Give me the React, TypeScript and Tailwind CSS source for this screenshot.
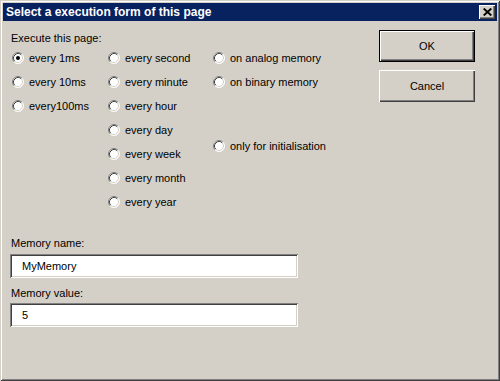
import React from "react";

const sunken =
  "shadow-[inset_1px_1px_#808080,inset_-1px_-1px_#ffffff,inset_2px_2px_#404040,inset_-2px_-2px_#d4d0c8]";
const raised =
  "shadow-[inset_1px_1px_#ffffff,inset_-1px_-1px_#404040,inset_-2px_-2px_#808080]";

function Radio({ label, checked = false, className = "" }: { label: string; checked?: boolean; className?: string }) {
  return (
    <label className={`flex h-[24px] items-center gap-[5px] ${className}`}>
      <svg width="12" height="12" viewBox="0 0 12 12" className="shrink-0">
        <circle cx="6" cy="6" r="5.5" fill="#ffffff" />
        <path d="M2.11 9.89 A5.5 5.5 0 0 1 9.89 2.11" fill="none" stroke="#808080" strokeWidth="1" />
        <path d="M9.89 2.11 A5.5 5.5 0 0 1 2.11 9.89" fill="none" stroke="#ffffff" strokeWidth="1" />
        <path d="M2.82 9.18 A4.5 4.5 0 0 1 9.18 2.82" fill="none" stroke="#404040" strokeWidth="1" />
        <path d="M9.18 2.82 A4.5 4.5 0 0 1 2.82 9.18" fill="none" stroke="#d4d0c8" strokeWidth="1" />
        {checked && <circle cx="6" cy="6" r="2" fill="#000000" />}
      </svg>
      <span className="whitespace-nowrap">{label}</span>
    </label>
  );
}

function Field({ value }: { value: string }) {
  return (
    <div className={`-ml-[1px] flex h-[24px] w-[288px] items-center bg-white pl-[12px] ${sunken}`}>{value}</div>
  );
}

export default function App() {
  return (
    <div
      className="flex h-[381px] w-[500px] flex-col bg-[#d4d0c8] p-[3px] text-[11px] leading-[13px] text-black shadow-[inset_1px_1px_#d4d0c8,inset_-1px_-1px_#404040,inset_2px_2px_#ffffff,inset_-2px_-2px_#808080]"
      style={{ fontFamily: "'Liberation Sans', Arial, sans-serif" }}
    >
      <div className="flex h-[18px] shrink-0 items-center bg-[#08215f] pl-[3px] pr-[2px]">
        <span className="flex-1 text-[12px] font-bold text-white">Select a execution form of this page</span>
        <button type="button" className={`flex h-[14px] w-[16px] items-center justify-center bg-[#d4d0c8] ${raised}`}>
          <svg width="9" height="8" viewBox="0 0 9 8">
            <path d="M0.7 0.6 L8.3 7.4 M8.3 0.6 L0.7 7.4" stroke="#000" strokeWidth="2" />
          </svg>
        </button>
      </div>

      <div className="flex flex-1 pl-[8px] pr-[22px]">
        <div className="flex flex-1 flex-col">
          <div className="mt-[11px] h-[13px]">Execute this page:</div>
          <div className="mt-[1px] grid grid-cols-[96px_105px_auto] pl-[1px]">
            <div className="flex flex-col">
              <Radio label="every 1ms" checked />
              <Radio label="every 10ms" />
              <Radio label="every100ms" />
            </div>
            <div className="flex flex-col">
              <Radio label="every second" />
              <Radio label="every minute" />
              <Radio label="every hour" />
              <Radio label="every day" />
              <Radio label="every week" />
              <Radio label="every month" />
              <Radio label="every year" />
            </div>
            <div className="flex flex-col">
              <Radio label="on analog memory" />
              <Radio label="on binary memory" />
              <Radio label="only for initialisation" className="mt-[40px]" />
            </div>
          </div>

          <div className="mt-[23px] h-[13px]">Memory name:</div>
          <div className="mt-[4px]">
            <Field value="MyMemory" />
          </div>
          <div className="mt-[9px] h-[13px]">Memory value:</div>
          <div className="mt-[3px]">
            <Field value="5" />
          </div>
        </div>

        <div className="mt-[9px] flex w-[96px] flex-col gap-[8px]">
          <button
            type="button"
            className="flex h-[32px] items-center justify-center bg-[#d4d0c8] shadow-[inset_0_0_0_1px_#000000,inset_2px_2px_#ffffff,inset_-2px_-2px_#404040,inset_-3px_-3px_#808080]"
          >
            OK
          </button>
          <button type="button" className={`flex h-[32px] items-center justify-center bg-[#d4d0c8] ${raised}`}>
            Cancel
          </button>
        </div>
      </div>
    </div>
  );
}
